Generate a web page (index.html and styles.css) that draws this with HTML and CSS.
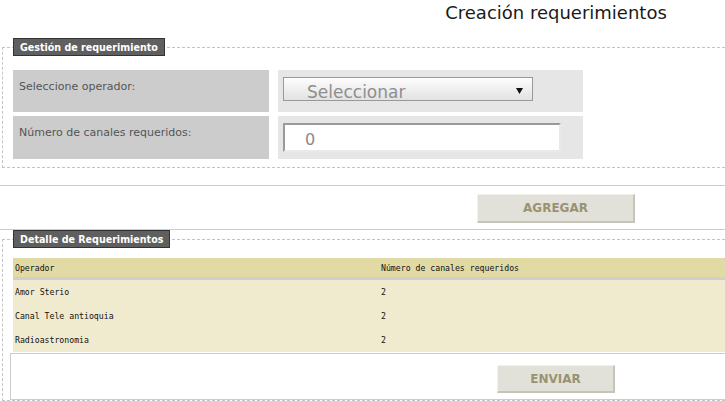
FILE: index.html
```html
<!DOCTYPE html>
<html lang="es">
<head>
<meta charset="utf-8">
<title>Creación requerimientos</title>
<link rel="stylesheet" href="styles.css">
</head>
<body>
<div class="page">
  <h1 class="title">Creación requerimientos</h1>

  <fieldset class="group">
    <legend class="group-legend">Gestión de requerimiento</legend>
    <div class="form-grid">
      <div class="label-cell">Seleccione operador:</div>
      <div class="value-cell">
        <div class="select">
          <span class="select-text">Seleccionar</span>
          <svg class="select-arrow" width="7" height="6" viewBox="0 0 7 6"><polygon points="0,0 7,0 3.5,6" fill="#111"/></svg>
        </div>
      </div>
      <div class="label-cell">Número de canales requeridos:</div>
      <div class="value-cell">
        <input class="text-input" type="text" value="0">
      </div>
    </div>
  </fieldset>

  <div class="action-bar">
    <button class="btn btn-add" type="button">AGREGAR</button>
  </div>

  <fieldset class="group group-detail">
    <legend class="group-legend">Detalle de Requerimientos</legend>
    <table class="detail-table">
      <thead>
        <tr><th class="col-op">Operador</th><th>Número de canales requeridos</th></tr>
      </thead>
      <tbody>
        <tr><td>Amor Sterio</td><td>2</td></tr>
        <tr><td>Canal Tele antioquia</td><td>2</td></tr>
        <tr><td>Radioastronomia</td><td>2</td></tr>
      </tbody>
    </table>
    <div class="send-box">
      <button class="btn btn-send" type="button">ENVIAR</button>
    </div>
  </fieldset>
</div>
</body>
</html>
```
FILE: styles.css
```css
html, body {
  margin: 0;
  padding: 0;
  overflow: hidden;
  background: #fff;
}
body {
  font-family: "DejaVu Sans", sans-serif;
  color: #222;
}
.page {
  width: 1112px;
}
.title {
  margin: 0;
  height: 38px;
  padding-top: 2px;
  box-sizing: border-box;
  font-size: 18px;
  line-height: 21px;
  font-weight: normal;
  text-align: center;
  color: #1a1a1a;
}
.group {
  margin: 0 2px;
  padding: 14px 10px 8px 10px;
  border: 1px dashed #c4c4c4;
  min-width: 0;
}
.group-legend {
  height: 18px;
  box-sizing: border-box;
  padding: 0 6px;
  background: #5f5f5f;
  border: 1px solid #333;
  color: #fff;
  font-family: "DejaVu Sans Condensed", "DejaVu Sans", sans-serif;
  font-stretch: condensed;
  font-weight: bold;
  font-size: 10.6px;
  line-height: 16px;
}
.form-grid {
  display: grid;
  grid-template-columns: 256px 305px;
  grid-template-rows: 42px 43px;
  column-gap: 9px;
  row-gap: 4px;
}
.label-cell {
  background: #cccccc;
  color: #555;
  font-size: 11px;
  line-height: 14px;
  padding: 10px 6px 0;
}
.value-cell {
  background: #e6e6e6;
  padding: 7px 5px 0;
}
.select {
  width: 250px;
  height: 24px;
  box-sizing: border-box;
  border: 1px solid #999;
  background: linear-gradient(#fdfdfd, #e2e2e2);
  display: flex;
  align-items: center;
  justify-content: space-between;
  padding: 5px 9px 0 23px;
}
.select-text {
  font-size: 17px;
  line-height: 18px;
  color: #8e8e8e;
}
.select-arrow {
  display: block;
  margin-bottom: 2px;
}
.text-input {
  display: block;
  width: 278px;
  height: 29px;
  box-sizing: border-box;
  margin: 0;
  border-style: solid;
  border-width: 2px;
  border-color: #9a9a9a #e9e9e9 #e9e9e9 #9a9a9a;
  background: #fff;
  padding: 3px 0 0 20px;
  font-family: "DejaVu Sans", sans-serif;
  font-size: 16px;
  color: #8a8a8a;
  outline: none;
}
.action-bar {
  margin-top: 17px;
  border-top: 1px solid #cccccc;
  border-bottom: 1px solid #cccccc;
  padding: 8px 0 6px;
  display: flex;
  justify-content: center;
}
.btn {
  margin: 0;
  background: #e2e1d9;
  border-style: solid;
  border-width: 1px 2px 2px 1px;
  border-color: #f2f1ec #c6c4b8 #c6c4b8 #f2f1ec;
  color: #9a9272;
  font-family: "DejaVu Sans", sans-serif;
  font-weight: bold;
  font-size: 12px;
  padding: 0;
}
.btn-add {
  width: 158px;
  height: 29px;
}
.group-detail {
  padding-top: 10px;
  padding-bottom: 0;
}
.detail-table {
  width: 100%;
  border-collapse: collapse;
  font-family: "DejaVu Sans Mono", monospace;
  font-size: 8.2px;
  color: #111;
}
.detail-table th {
  background: #e1daa5;
  font-weight: normal;
  text-align: left;
  height: 19px;
  padding: 0 2px;
  border-bottom: 3px solid #cfcfcf;
}
.detail-table .col-op {
  width: 362px;
}
.detail-table td {
  background: #f0ebcf;
  height: 24px;
  padding: 0 2px;
}
.send-box {
  margin: 1px -3px 0;
  border: 1px solid #cccccc;
  padding: 11px 0 6px;
  display: flex;
  justify-content: center;
}
.btn-send {
  width: 118px;
  height: 28px;
}
```
